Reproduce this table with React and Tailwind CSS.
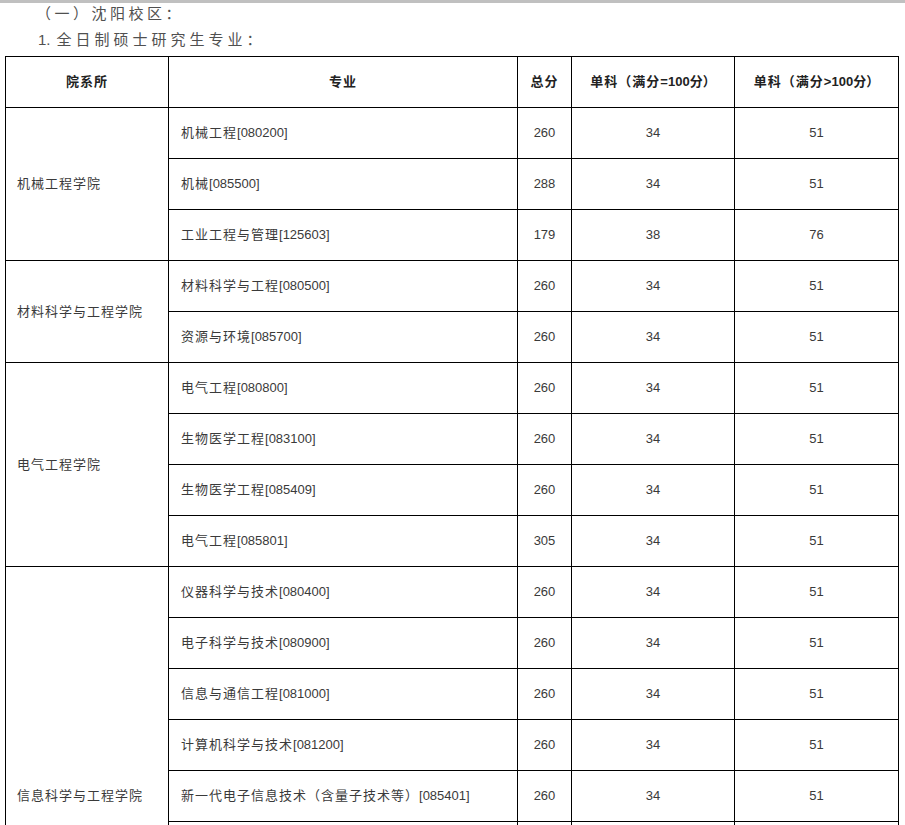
import React from "react";

const groups = [
  {
    dept: "机械工程学院",
    items: [
      ["机械工程", "080200", "260", "34", "51"],
      ["机械", "085500", "288", "34", "51"],
      ["工业工程与管理", "125603", "179", "38", "76"],
    ],
  },
  {
    dept: "材料科学与工程学院",
    items: [
      ["材料科学与工程", "080500", "260", "34", "51"],
      ["资源与环境", "085700", "260", "34", "51"],
    ],
  },
  {
    dept: "电气工程学院",
    items: [
      ["电气工程", "080800", "260", "34", "51"],
      ["生物医学工程", "083100", "260", "34", "51"],
      ["生物医学工程", "085409", "260", "34", "51"],
      ["电气工程", "085801", "305", "34", "51"],
    ],
  },
  {
    dept: "信息科学与工程学院",
    items: [
      ["仪器科学与技术", "080400", "260", "34", "51"],
      ["电子科学与技术", "080900", "260", "34", "51"],
      ["信息与通信工程", "081000", "260", "34", "51"],
      ["计算机科学与技术", "081200", "260", "34", "51"],
      ["新一代电子信息技术（含量子技术等）", "085401", "260", "34", "51"],
      ["通信工程（含宽带网络、移动通信等）", "085402", "260", "34", "51"],
      ["集成电路工程", "085403", "260", "34", "51"],
      ["计算机技术", "085404", "260", "34", "51"],
      ["控制工程", "085406", "260", "34", "51"],
    ],
  },
];

const font = {
  fontFamily: '"Liberation Sans", "Noto Sans CJK SC", sans-serif',
};

export default function App() {
  const cell = "border border-black p-0 h-[51px] align-middle";
  return (
    <div className="w-[905px] h-[825px] overflow-hidden bg-white" style={font}>
      <div className="h-[3px] bg-[#c0c0c0]" />
      <div className="h-[22px] leading-[22px] pl-[36px] text-[15px] tracking-[3.5px] text-[#505050]">
        （一）沈阳校区：
      </div>
      <div className="h-[31px] leading-[30px] pl-[38px] text-[15px] text-[#505050] flex">
        <span className="mr-[6px]">1.</span>
        <span className="tracking-[4px]">全日制硕士研究生专业：</span>
      </div>
      <table className="ml-[5px] w-[893px] table-fixed border-collapse text-[13px] text-[#3a3a3a]">
        <colgroup>
          <col className="w-[163px]" />
          <col className="w-[349px]" />
          <col className="w-[54px]" />
          <col className="w-[163px]" />
          <col className="w-[164px]" />
        </colgroup>
        <thead>
          <tr>
            <th className={`${cell} text-center font-semibold text-[#222] tracking-[1px]`}>院系所</th>
            <th className={`${cell} text-center font-semibold text-[#222] tracking-[1px]`}>专业</th>
            <th className={`${cell} text-center font-semibold text-[#222] tracking-[1px]`}>总分</th>
            <th className={`${cell} text-center font-semibold text-[#222]`}>
              <span className="tracking-[1px]">单科（满分</span>=100<span>分）</span>
            </th>
            <th className={`${cell} text-center font-semibold text-[#222]`}>
              <span className="tracking-[1px]">单科（满分</span>&gt;100<span>分）</span>
            </th>
          </tr>
        </thead>
        <tbody>
          {groups.map((g) =>
            g.items.map((it, i) => (
              <tr key={g.dept + it[1]}>
                {i === 0 && (
                  <td rowSpan={g.items.length} className={`${cell} pl-[11px] tracking-[1px]`}>
                    {g.dept}
                  </td>
                )}
                <td className={`${cell} pl-[12px] whitespace-nowrap`}>
                  <span className="tracking-[1px]">{it[0]}</span>
                  <span>[{it[1]}]</span>
                </td>
                <td className={`${cell} text-center`}>{it[2]}</td>
                <td className={`${cell} text-center`}>{it[3]}</td>
                <td className={`${cell} text-center`}>{it[4]}</td>
              </tr>
            ))
          )}
        </tbody>
      </table>
    </div>
  );
}
